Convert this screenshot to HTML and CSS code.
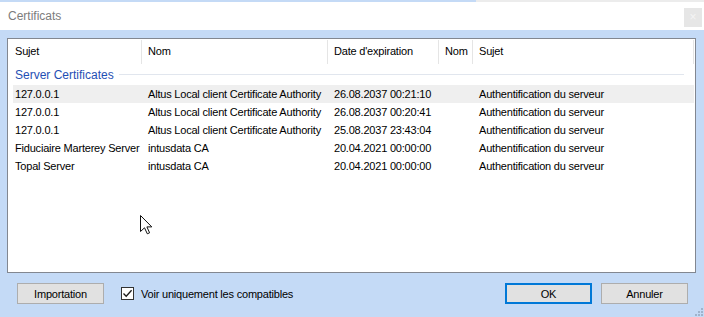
FILE: index.html
```html
<!DOCTYPE html>
<html lang="fr">
<head>
    <meta charset="UTF-8">
    <title>Certificats</title>
    <link rel="stylesheet" href="styles.css">
</head>
<body>
    <div class="window">
        <div class="topline"><span class="topline-a"></span><span class="topline-b"></span></div>
        <div class="titlebar">
            <span class="title">Certificats</span>
            <span class="close">×</span>
        </div>

        <div class="client">
            <div class="list">
                <div class="head">
                    <div class="hcell first">Sujet</div>
                    <div class="hcell">Nom</div>
                    <div class="hcell">Date d'expiration</div>
                    <div class="hcell">Nom</div>
                    <div class="hcell">Sujet</div>
                </div>

                <div class="group">
                    <span class="group-name">Server Certificates</span>
                    <span class="group-line"></span>
                </div>

                <div class="row hot">
                    <div class="cell first">127.0.0.1</div>
                    <div class="cell">Altus Local client Certificate Authority</div>
                    <div class="cell">26.08.2037 00:21:10</div>
                    <div class="cell"></div>
                    <div class="cell">Authentification du serveur</div>
                </div>
                <div class="row">
                    <div class="cell first">127.0.0.1</div>
                    <div class="cell">Altus Local client Certificate Authority</div>
                    <div class="cell">26.08.2037 00:20:41</div>
                    <div class="cell"></div>
                    <div class="cell">Authentification du serveur</div>
                </div>
                <div class="row">
                    <div class="cell first">127.0.0.1</div>
                    <div class="cell">Altus Local client Certificate Authority</div>
                    <div class="cell">25.08.2037 23:43:04</div>
                    <div class="cell"></div>
                    <div class="cell">Authentification du serveur</div>
                </div>
                <div class="row">
                    <div class="cell first">Fiduciaire Marterey Server</div>
                    <div class="cell">intusdata CA</div>
                    <div class="cell">20.04.2021 00:00:00</div>
                    <div class="cell"></div>
                    <div class="cell">Authentification du serveur</div>
                </div>
                <div class="row">
                    <div class="cell first">Topal Server</div>
                    <div class="cell">intusdata CA</div>
                    <div class="cell">20.04.2021 00:00:00</div>
                    <div class="cell"></div>
                    <div class="cell">Authentification du serveur</div>
                </div>
            </div>

            <div class="footer">
                <button class="btn import-btn">Importation</button>
                <label class="check">
                    <span class="check-box">
                        <svg width="11" height="11" viewBox="0 0 11 11"><path d="M1.5 5.5 L4.2 8.3 L9.6 2.2" fill="none" stroke="#1a1a1a" stroke-width="1.3"/></svg>
                    </span>
                    Voir uniquement les compatibles
                </label>
                <span class="spacer"></span>
                <button class="btn default-btn">OK</button>
                <button class="btn cancel-btn">Annuler</button>
            </div>
        </div>

        <svg class="cursor" width="13" height="20" viewBox="0 0 13 20">
            <path d="M0.5 0.5 L0.5 16.5 L4.5 12.8 L7.3 18.8 L9.6 17.8 L6.9 11.9 L11.8 11.9 Z" fill="#fff" stroke="#111" stroke-width="1"/>
        </svg>

        <svg class="grip" width="9" height="9" viewBox="0 0 9 9">
            <rect x="7" y="1" width="2" height="2" fill="#9fb3cc"/>
            <rect x="4" y="4" width="2" height="2" fill="#9fb3cc"/>
            <rect x="7" y="4" width="2" height="2" fill="#9fb3cc"/>
            <rect x="1" y="7" width="2" height="2" fill="#9fb3cc"/>
            <rect x="4" y="7" width="2" height="2" fill="#9fb3cc"/>
            <rect x="7" y="7" width="2" height="2" fill="#9fb3cc"/>
        </svg>
    </div>
</body>
</html>
```

FILE: styles.css
```css
body {
    margin: 0;
    font-family: "Liberation Sans", Arial, sans-serif;
    font-size: 11px;
    letter-spacing: -0.2px;
    color: #000;
    background-color: #c4daf6;
}

.window {
    position: relative;
    width: 704px;
    height: 317px;
    display: flex;
    flex-direction: column;
    overflow: hidden;
}

.topline {
    display: flex;
    height: 2px;
}

.topline-a {
    width: 476px;
    background: #c4daf6;
}

.topline-b {
    flex: 1;
    background: #ececec;
}

.titlebar {
    height: 28px;
    background: #fff;
    display: flex;
    align-items: center;
    justify-content: space-between;
    padding: 0 2px 0 8px;
}

.title {
    font-size: 12px;
    letter-spacing: 0;
    color: #7c7c7c;
}

.close {
    width: 18px;
    height: 19px;
    margin-top: 3px;
    background: #e6e6e6;
    color: #f4f4f4;
    font-size: 12px;
    line-height: 19px;
    text-align: center;
}

.client {
    flex: 1;
    display: flex;
    flex-direction: column;
    padding: 8px 8px 0 7px;
}

.list {
    height: 235px;
    box-sizing: border-box;
    border: 1px solid #828790;
    background: #fff;
}

.head {
    display: grid;
    grid-template-columns: 134px 186px 111px 34px 221px;
    height: 25px;
}

.hcell {
    margin-top: 1px;
    padding-left: 6px;
    line-height: 23px;
    border-right: 1px solid #e5e5e5;
    white-space: nowrap;
}

.hcell.first {
    padding-left: 7px;
}

.group {
    display: flex;
    align-items: center;
    gap: 5px;
    height: 21px;
    padding: 0 11px 0 7px;
}

.group-name {
    font-size: 12px;
    letter-spacing: 0;
    color: #1f4fb4;
}

.group-line {
    flex: 1;
    height: 1px;
    background: #e1e6ee;
}

.row {
    display: grid;
    grid-template-columns: 129px 186px 111px 34px 1fr;
    height: 18px;
    line-height: 18px;
    margin: 0 1px 0 5px;
}

.row.hot {
    background: #efefef;
}

.cell {
    padding-left: 6px;
    white-space: nowrap;
    overflow: hidden;
}

.cell.first {
    padding-left: 2px;
}

.footer {
    display: flex;
    align-items: center;
    margin-top: 10px;
    padding: 0 8px 0 10px;
}

.btn {
    box-sizing: border-box;
    width: 87px;
    height: 21px;
    padding: 0;
    border: 1px solid #adadad;
    background: #e1e1e1;
    font-family: inherit;
    font-size: 11px;
    letter-spacing: -0.2px;
    color: #000;
}

.default-btn {
    border: 2px solid #0078d7;
}

.cancel-btn {
    margin-left: 9px;
}

.check {
    display: flex;
    align-items: center;
    gap: 7px;
    margin-left: 17px;
}

.check-box {
    box-sizing: border-box;
    width: 13px;
    height: 13px;
    border: 1px solid #333;
    background: #fff;
    display: flex;
    align-items: center;
    justify-content: center;
}

.spacer {
    flex: 1;
}

.cursor {
    position: absolute;
    left: 140px;
    top: 215px;
}

.grip {
    position: absolute;
    right: 1px;
    bottom: 1px;
}
```
